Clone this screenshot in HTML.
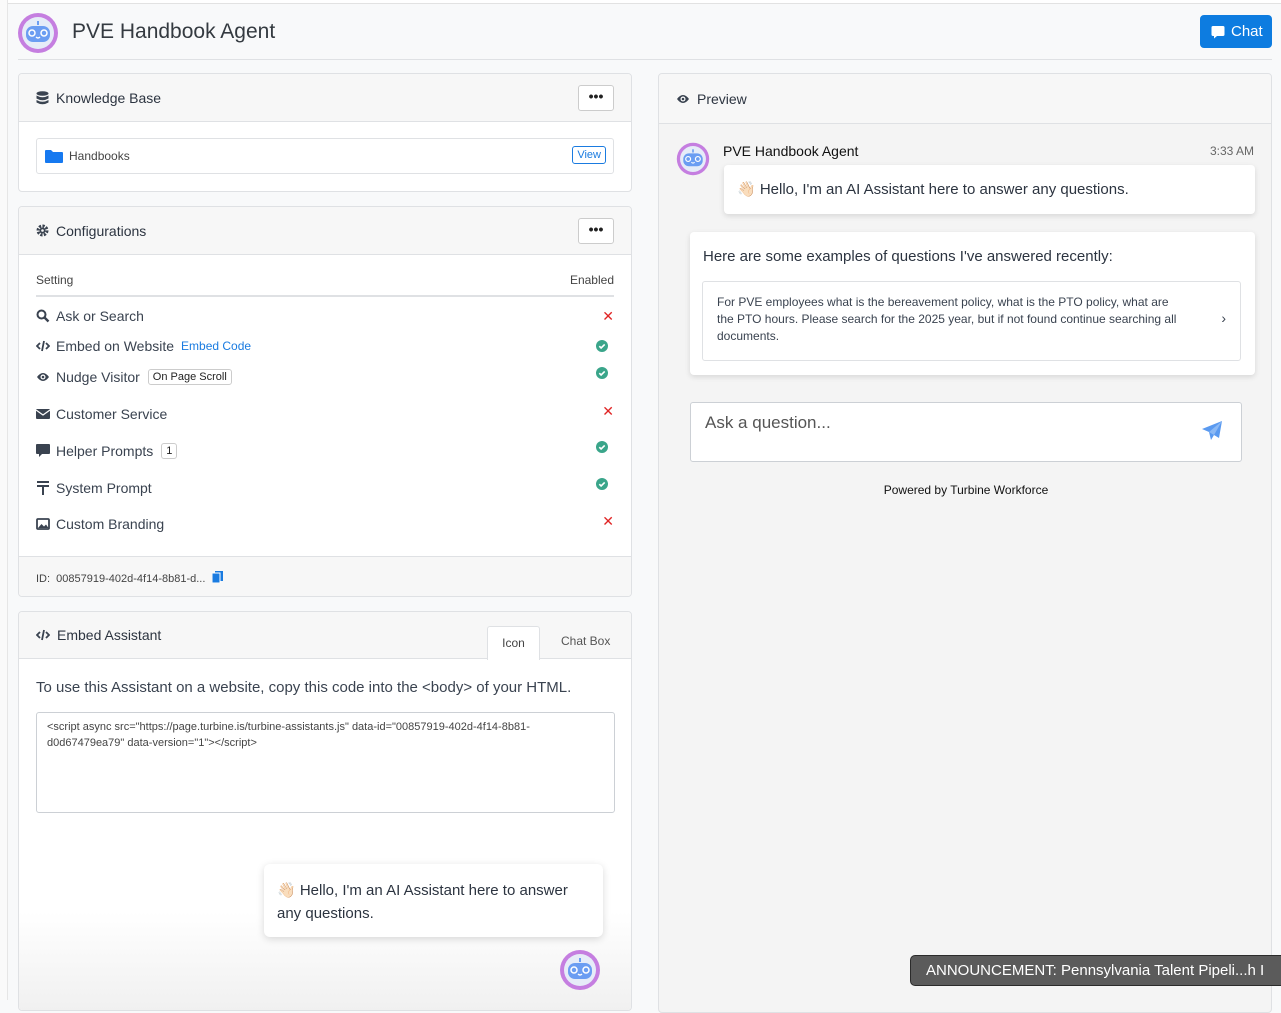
<!DOCTYPE html>
<html><head><meta charset="utf-8"><style>
*{box-sizing:border-box;margin:0;padding:0}
body{width:1281px;height:1000px;overflow:hidden;background:#f8f9fa;font-family:"Liberation Sans",sans-serif;color:#343a40;position:relative}
.abs{position:absolute}
.card{position:absolute;background:#fff;border:1px solid #dfe1e4;border-radius:4px;overflow:hidden}
.ch{background:#f7f7f7;border-bottom:1px solid #dfe1e4;height:48px;display:flex;align-items:center;padding-left:17px;font-size:14px;color:#2c3440}
.ch svg{margin-right:7px}
.dots{position:absolute;right:17px;top:11px;width:36px;height:26px;border:1px solid #ccc;border-radius:3px;background:#fff;font-size:14px;font-weight:bold;text-align:center;line-height:20px;color:#222}
.row{position:absolute;left:17px;right:17px;display:flex;align-items:center;font-size:14px;color:#3a4350}
.row svg{margin-right:6px}
.st{position:absolute;right:0}
.x{color:#e02424;font-size:14px}
.tag{border:1px solid #ccc;border-radius:3px;font-size:11px;padding:1px 4px;margin-left:8px;color:#222}
</style></head><body>
<div class="abs" style="left:0;top:0;width:1281px;height:4px;border-bottom:1px solid #e2e2e2;background:#fff"></div>
<div class="abs" style="left:0;top:0;width:8px;height:1000px;border-right:1px solid #e6e6e6;background:#fafafa"></div>

<svg class="abs" style="left:17px;top:12px" width="42" height="42" viewBox="0 0 42 42"><circle cx="21" cy="21" r="20" fill="#c57ee0"/><circle cx="21" cy="21" r="16" fill="#e6ecf8"/><rect x="9" y="14" width="24" height="16" rx="7" fill="#6b9df2"/><circle cx="15" cy="21" r="3" fill="none" stroke="#fff" stroke-width="1.5"/><circle cx="27" cy="21" r="3" fill="none" stroke="#fff" stroke-width="1.5"/><path d="M19 25q2 2 4 0" stroke="#fff" fill="none" stroke-width="1.3"/><rect x="20" y="9" width="2" height="4" fill="#6b9df2"/></svg>
<div class="abs" style="left:72px;top:20px;font-size:21px;color:#343a40">PVE Handbook Agent</div>
<div class="abs" style="left:1200px;top:15px;width:72px;height:33px;background:#0d7ce0;border-radius:4px;color:#fff;font-size:15px;display:flex;align-items:center;padding-left:11px"><svg width="14" height="14" viewBox="0 0 14 14" style="margin-right:6px"><path d="M2 1h10a1.5 1.5 0 0 1 1.5 1.5v7A1.5 1.5 0 0 1 12 11H6l-3 2.5V11H2A1.5 1.5 0 0 1 .5 9.5v-7A1.5 1.5 0 0 1 2 1z" fill="#fff"/></svg>Chat</div>
<div class="abs" style="left:18px;top:59px;width:1254px;height:1px;background:#dfe1e4"></div>

<!-- Knowledge base -->
<div class="card" style="left:18px;top:73px;width:614px;height:119px">
<div class="ch"><svg width="13" height="14" viewBox="0 0 13 14"><ellipse cx="6.5" cy="2.5" rx="6" ry="2.3" fill="#3a4350"/><path d="M.5 4.5q6 3.5 12 0v3q-6 3.5-12 0zM.5 9q6 3.5 12 0v2.5q-6 3.5-12 0z" fill="#3a4350"/></svg>Knowledge Base<div class="dots">•••</div></div>
<div class="abs" style="left:17px;top:64px;width:578px;height:36px;border:1px solid #dfe1e4;border-radius:3px;display:flex;align-items:center;padding-left:8px;font-size:12px;color:#444"><svg width="18" height="14" viewBox="0 0 18 14" style="margin-right:6px"><path d="M0 2a1 1 0 0 1 1-1h5l2 2h9a1 1 0 0 1 1 1v9a1 1 0 0 1-1 1H1a1 1 0 0 1-1-1z" fill="#1679f0"/></svg>Handbooks
<div class="abs" style="right:7px;top:7px;border:1px solid #1a7be0;border-radius:3px;color:#1a7be0;font-size:11px;padding:2px 4px">View</div></div>
</div>

<!-- Configurations -->
<div class="card" style="left:18px;top:206px;width:614px;height:391px">
<div class="ch"><svg width="13" height="13" viewBox="0 0 13 13"><circle cx="6.5" cy="6.5" r="4.5" fill="none" stroke="#3a4350" stroke-width="3" stroke-dasharray="2.2 1.3"/><circle cx="6.5" cy="6.5" r="3" fill="#3a4350"/><circle cx="6.5" cy="6.5" r="1.3" fill="#f7f7f7"/></svg>Configurations<div class="dots">•••</div></div>
<div class="abs" style="left:17px;right:17px;top:66px;font-size:12px;color:#444;padding-bottom:8px;border-bottom:2px solid #dfe1e4">Setting<span style="float:right">Enabled</span></div>
<div class="row" style="top:101px"><svg width="14" height="14" viewBox="0 0 14 14"><circle cx="5.5" cy="5.5" r="4" fill="none" stroke="#3a4350" stroke-width="2"/><path d="M8.5 8.5l4 4" stroke="#3a4350" stroke-width="2.4"/></svg>Ask or Search<span class="st x">✕</span></div>
<div class="row" style="top:131px"><svg width="14" height="12" viewBox="0 0 14 12"><path d="M4 3L1 6l3 3M10 3l3 3-3 3M8 1L6 11" stroke="#3a4350" stroke-width="1.8" fill="none"/></svg>Embed on Website<span style="color:#1a7be0;font-size:12px;margin-left:7px">Embed Code</span><svg class="st" width="12" height="12" viewBox="0 0 12 12"><circle cx="6" cy="6" r="6" fill="#3aa58a"/><path d="M3.3 6.2l1.8 1.8 3.6-3.6" stroke="#fff" stroke-width="1.6" fill="none"/></svg></div>
<div class="row" style="top:162px"><svg width="14" height="12" viewBox="0 0 14 12"><path d="M1 6q6-8 12 0-6 8-12 0z" fill="#3a4350"/><circle cx="7" cy="6" r="2.5" fill="#fff"/><circle cx="7" cy="6" r="1.3" fill="#3a4350"/></svg>Nudge Visitor<span class="tag">On Page Scroll</span><svg class="st" style="top:-2px" width="12" height="12" viewBox="0 0 12 12"><circle cx="6" cy="6" r="6" fill="#3aa58a"/><path d="M3.3 6.2l1.8 1.8 3.6-3.6" stroke="#fff" stroke-width="1.6" fill="none"/></svg></div>
<div class="row" style="top:199px"><svg width="14" height="12" viewBox="0 0 14 12"><rect y="1" width="14" height="10" rx="1" fill="#3a4350"/><path d="M0 2l7 5 7-5" stroke="#fff" stroke-width="1.3" fill="none"/></svg>Customer Service<span class="st x" style="top:-3px">✕</span></div>
<div class="row" style="top:236px"><svg width="14" height="14" viewBox="0 0 14 14"><path d="M1 0h12a1 1 0 0 1 1 1v8a1 1 0 0 1-1 1H6l-3 3v-3H1a1 1 0 0 1-1-1V1a1 1 0 0 1 1-1z" fill="#3a4350"/></svg>Helper Prompts<span class="tag" style="padding:1px 4px">1</span><svg class="st" style="top:-2px" width="12" height="12" viewBox="0 0 12 12"><circle cx="6" cy="6" r="6" fill="#3aa58a"/><path d="M3.3 6.2l1.8 1.8 3.6-3.6" stroke="#fff" stroke-width="1.6" fill="none"/></svg></div>
<div class="row" style="top:273px"><svg width="14" height="14" viewBox="0 0 14 14"><path d="M1 1h12M1 5h12M7 5v9" stroke="#3a4350" stroke-width="2"/></svg>System Prompt<svg class="st" style="top:-2px" width="12" height="12" viewBox="0 0 12 12"><circle cx="6" cy="6" r="6" fill="#3aa58a"/><path d="M3.3 6.2l1.8 1.8 3.6-3.6" stroke="#fff" stroke-width="1.6" fill="none"/></svg></div>
<div class="row" style="top:309px"><svg width="14" height="12" viewBox="0 0 14 12"><rect x="1" y="1" width="12" height="10" rx="1" fill="none" stroke="#3a4350" stroke-width="1.8"/><path d="M2 10l3.5-4 2.5 2.5 2-2 2.5 3.5z" fill="#3a4350"/></svg>Custom Branding<span class="st x" style="top:-3px">✕</span></div>
<div class="abs" style="left:0;right:0;top:349px;height:42px;background:#f7f7f7;border-top:1px solid #dfe1e4;font-size:11px;color:#444;padding:14px 17px">ID:&nbsp; 00857919-402d-4f14-8b81-d... <svg width="11" height="12" viewBox="0 0 11 12" style="vertical-align:-1px;margin-left:4px"><rect x="3" y="0" width="8" height="10" fill="#1a7be0"/><rect x="0" y="2" width="8" height="10" fill="#1a7be0" stroke="#fff" stroke-width="1"/></svg></div>
</div>

<!-- Embed -->
<div class="card" style="left:18px;top:611px;width:614px;height:400px">
<div class="ch" style="height:47px"><svg width="14" height="12" viewBox="0 0 14 12"><path d="M4 3L1 6l3 3M10 3l3 3-3 3M8 1L6 11" stroke="#3a4350" stroke-width="1.8" fill="none"/></svg>Embed Assistant</div>
<div class="abs" style="left:468px;top:14px;width:53px;height:34px;background:#fff;border:1px solid #dfe1e4;border-bottom:none;border-radius:3px 3px 0 0;font-size:12px;color:#444;text-align:center;line-height:32px">Icon</div>
<div class="abs" style="left:542px;top:22px;font-size:12px;color:#555">Chat Box</div>
<div class="abs" style="left:17px;top:67px;font-size:15px;color:#3a4350">To use this Assistant on a website, copy this code into the &lt;body&gt; of your HTML.</div>
<div class="abs" style="left:17px;top:100px;width:579px;height:101px;border:1px solid #ccd0d5;border-radius:3px;padding:6px 10px;font-size:11px;line-height:16px;color:#444">&lt;script async src="https://page.turbine.is/turbine-assistants.js" data-id="00857919-402d-4f14-8b81-d0d67479ea79" data-version="1"&gt;&lt;/script&gt;</div>
<div class="abs" style="left:0;top:300px;width:614px;height:100px;background:linear-gradient(#fff,#f0f0f0)"></div>
<div class="abs" style="left:245px;top:252px;width:339px;height:73px;background:#fff;border-radius:6px;box-shadow:0 2px 8px rgba(0,0,0,.15);padding:15px 13px;font-size:15px;line-height:23px;color:#2c3440">👋🏻 Hello, I'm an AI Assistant here to answer any questions.</div>
<svg class="abs" style="left:540px;top:337px" width="42" height="42" viewBox="0 0 42 42"><circle cx="21" cy="21" r="20" fill="#c57ee0"/><circle cx="21" cy="21" r="16" fill="#e6ecf8"/><rect x="9" y="14" width="24" height="16" rx="7" fill="#6b9df2"/><circle cx="15" cy="21" r="3" fill="none" stroke="#fff" stroke-width="1.5"/><circle cx="27" cy="21" r="3" fill="none" stroke="#fff" stroke-width="1.5"/><path d="M19 25q2 2 4 0" stroke="#fff" fill="none" stroke-width="1.3"/><rect x="20" y="9" width="2" height="4" fill="#6b9df2"/></svg>
</div>

<!-- Preview -->
<div class="card" style="left:658px;top:73px;width:614px;height:940px;background:#f4f4f4">
<div class="ch" style="height:50px"><svg width="14" height="12" viewBox="0 0 14 12"><path d="M1 6q6-8 12 0-6 8-12 0z" fill="#3a4350"/><circle cx="7" cy="6" r="2.5" fill="#fff"/><circle cx="7" cy="6" r="1.3" fill="#3a4350"/></svg>Preview</div>
<svg class="abs" style="left:17px;top:68px" width="34" height="34" viewBox="0 0 42 42"><circle cx="21" cy="21" r="20" fill="#c57ee0"/><circle cx="21" cy="21" r="16" fill="#e6ecf8"/><rect x="9" y="14" width="24" height="16" rx="7" fill="#6b9df2"/><circle cx="15" cy="21" r="3" fill="none" stroke="#fff" stroke-width="1.5"/><circle cx="27" cy="21" r="3" fill="none" stroke="#fff" stroke-width="1.5"/><path d="M19 25q2 2 4 0" stroke="#fff" fill="none" stroke-width="1.3"/><rect x="20" y="9" width="2" height="4" fill="#6b9df2"/></svg>
<div class="abs" style="left:64px;top:69px;font-size:14px;color:#111">PVE Handbook Agent</div>
<div class="abs" style="right:17px;top:70px;font-size:12px;color:#666">3:33 AM</div>
<div class="abs" style="left:65px;top:91px;width:531px;height:49px;background:#fff;border-radius:4px;box-shadow:0 2px 6px rgba(0,0,0,.12);padding:15px 13px;font-size:15px;color:#2c3440">👋🏻 Hello, I'm an AI Assistant here to answer any questions.</div>
<div class="abs" style="left:31px;top:158px;width:565px;height:143px;background:#fff;border-radius:4px;box-shadow:0 2px 6px rgba(0,0,0,.12)">
<div class="abs" style="left:13px;top:16px;font-size:15px;color:#2c3440">Here are some examples of questions I've answered recently:</div>
<div class="abs" style="left:12px;top:49px;width:539px;height:80px;border:1px solid #dfe1e4;border-radius:3px;padding:12px 60px 0 14px;font-size:12px;line-height:17px;color:#3a4350">For PVE employees what is the bereavement policy, what is the PTO policy, what are the PTO hours. Please search for the 2025 year, but if not found continue searching all documents.<span class="abs" style="right:14px;top:28px;font-size:14px">›</span></div>
</div>
<div class="abs" style="left:31px;top:328px;width:552px;height:60px;background:#fff;border:1px solid #ccd0d5;border-radius:3px;padding:10px 14px;font-size:17px;color:#555">Ask a question...
<svg class="abs" style="right:18px;top:17px" width="22" height="22" viewBox="0 0 22 22"><path d="M21 1L1 9l7 3 2 8 3-5 5 3z" fill="#5a9af0"/><path d="M8 12l13-11-8 14" fill="#8bb9f5"/></svg></div>
<div class="abs" style="left:0;width:614px;top:409px;text-align:center;font-size:12px;color:#111">Powered by Turbine Workforce</div>
</div>

<div class="abs" style="left:910px;top:955px;width:380px;height:31px;background:#5b5b5b;border:1px solid #2b2b2b;border-radius:5px;color:#fff;font-size:15px;padding:6px 15px;white-space:nowrap;overflow:hidden">ANNOUNCEMENT: Pennsylvania Talent Pipeli...h I</div>
</body></html>
